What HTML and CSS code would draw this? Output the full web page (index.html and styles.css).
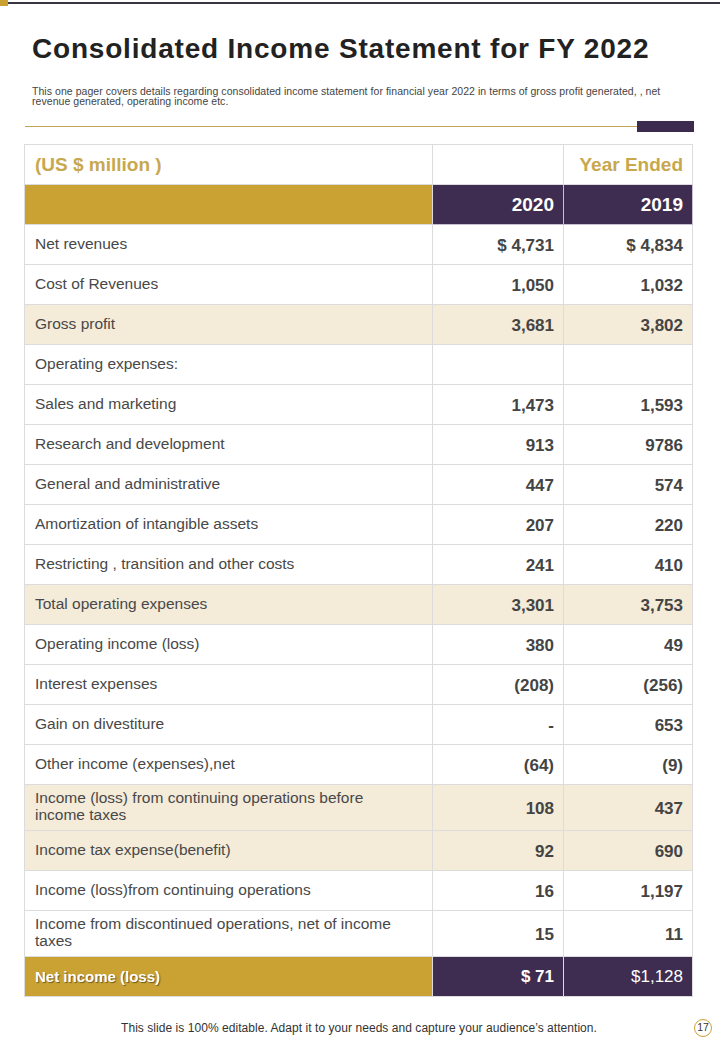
FILE: index.html
```html
<!DOCTYPE html>
<html>
<head>
<meta charset="utf-8">
<link rel="stylesheet" href="styles.css">
</head>
<body>
<div class="page">
  <div class="topbar"><span class="top-gold"></span><span class="top-line"></span></div>
  <h1 class="title">Consolidated Income Statement for FY 2022</h1>
  <p class="subtitle">This one pager covers details regarding consolidated income statement for financial year 2022 in terms of gross profit generated, , net revenue generated, operating income etc.</p>
  <div class="divider"><span class="div-line"></span><span class="div-block"></span></div>

  <table class="fin">
    <colgroup><col class="c-label"><col class="c-num"><col class="c-num2"></colgroup>
    <tr class="h1">
      <td class="unit">(US $ million )</td>
      <td></td>
      <td class="ye">Year Ended</td>
    </tr>
    <tr class="h2">
      <td class="gold"></td>
      <td class="purple">2020</td>
      <td class="purple">2019</td>
    </tr>
    <tr><td class="lbl">Net revenues</td><td class="num">$ 4,731</td><td class="num">$ 4,834</td></tr>
    <tr><td class="lbl">Cost of Revenues</td><td class="num">1,050</td><td class="num">1,032</td></tr>
    <tr class="hl"><td class="lbl">Gross profit</td><td class="num">3,681</td><td class="num">3,802</td></tr>
    <tr><td class="lbl">Operating expenses:</td><td class="num"></td><td class="num"></td></tr>
    <tr><td class="lbl">Sales and marketing</td><td class="num">1,473</td><td class="num">1,593</td></tr>
    <tr><td class="lbl">Research and development</td><td class="num">913</td><td class="num">9786</td></tr>
    <tr><td class="lbl">General and administrative</td><td class="num">447</td><td class="num">574</td></tr>
    <tr><td class="lbl">Amortization of intangible assets</td><td class="num">207</td><td class="num">220</td></tr>
    <tr><td class="lbl">Restricting , transition and other costs</td><td class="num">241</td><td class="num">410</td></tr>
    <tr class="hl"><td class="lbl">Total operating expenses</td><td class="num">3,301</td><td class="num">3,753</td></tr>
    <tr><td class="lbl">Operating income (loss)</td><td class="num">380</td><td class="num">49</td></tr>
    <tr><td class="lbl">Interest expenses</td><td class="num">(208)</td><td class="num">(256)</td></tr>
    <tr><td class="lbl">Gain on divestiture</td><td class="num">-</td><td class="num">653</td></tr>
    <tr><td class="lbl">Other income (expenses),net</td><td class="num">(64)</td><td class="num">(9)</td></tr>
    <tr class="hl tall"><td class="lbl two">Income (loss) from continuing operations before income taxes</td><td class="num">108</td><td class="num">437</td></tr>
    <tr class="hl"><td class="lbl">Income tax expense(benefit)</td><td class="num">92</td><td class="num">690</td></tr>
    <tr><td class="lbl">Income (loss)from continuing operations</td><td class="num">16</td><td class="num">1,197</td></tr>
    <tr class="tall"><td class="lbl two">Income from discontinued operations, net of income taxes</td><td class="num">15</td><td class="num">11</td></tr>
    <tr class="total">
      <td class="gold tl">Net income (loss)</td>
      <td class="purple tv">$ 71</td>
      <td class="purple tv light">$1,128</td>
    </tr>
  </table>

  <div class="footer">
    <p class="foot-text">This slide is 100% editable. Adapt it to your needs and capture your audience’s attention.</p>
    <span class="pagenum">17</span>
  </div>
</div>
</body>
</html>
```

FILE: styles.css
```css
* { box-sizing: border-box; }
html, body { margin: 0; padding: 0; background: #ffffff; }
body { width: 720px; height: 1040px; overflow: hidden; font-family: "Liberation Sans", Arial, sans-serif; color: #404040; }
.page { position: relative; width: 720px; height: 1040px; }

.topbar { display: flex; align-items: flex-start; height: 6px; }
.top-gold { width: 8px; height: 6px; background: #c9a233; }
.top-line { flex: 1; height: 2px; margin-top: 2px; background: #3a3440; }

.title {
  margin: 27px 0 0 32px;
  font-size: 28px;
  line-height: 32px;
  font-weight: 700;
  color: #222222;
  letter-spacing: 0.8px;
}

.subtitle {
  margin: 21px 0 0 32px;
  width: 642px;
  font-size: 10.5px;
  line-height: 10px;
  color: #444444;
  letter-spacing: 0.05px;
}

.divider { display: flex; align-items: center; margin: 15px 0 0 25px; width: 669px; height: 11px; }
.div-line { flex: 1; height: 1px; background: #c2a55a; }
.div-block { width: 57px; height: 11px; background: #3d2b4f; }

.fin {
  margin: 12px 0 0 24px;
  width: 668px;
  border-collapse: collapse;
  table-layout: fixed;
  border: 1px solid #d9d9d9;
}
.c-label { width: 408px; }
.c-num { width: 131px; }
.c-num2 { width: 129px; }

.fin td {
  border: 1px solid #dcdcdc;
  height: 40px;
  padding: 0;
  vertical-align: middle;
}
.fin tr.tall td { height: 46px; }

.lbl {
  padding-left: 10px !important;
  padding-right: 20px !important;
  font-size: 15.5px;
  line-height: 18px;
  color: #484848;
  padding-bottom: 2px !important;
}
.lbl.two { line-height: 17px; padding-bottom: 3px !important; }

.num {
  text-align: right;
  padding-right: 9px !important;
  font-size: 17px;
  font-weight: 700;
  color: #444444;
  padding-top: 2px !important;
}

.hl td { background: #f4ebd9; }

.h1 td { height: 40px; }
.unit { padding-left: 10px !important; font-size: 19px; font-weight: 700; color: #c8a84e; }
.ye { text-align: right; padding-right: 9px !important; font-size: 19px; font-weight: 700; color: #c8a84e; }

.gold { background: #c9a233; }
.purple { background: #3e2d50; color: #ffffff; text-align: right; padding-right: 9px !important; font-size: 19px; font-weight: 700; }
.h2 .purple { border-color: #c9bfd2 !important; }
.h2 td { border-top-color: #dcdcdc; }

.total td { height: 40px; }
.tl { padding-left: 10px !important; color: #ffffff; font-size: 15px; font-weight: 700; text-shadow: 1px 1px 1px rgba(0,0,0,0.45); }
.tv { font-size: 17px; }
.tv.light { font-weight: 400; }

.footer {
  position: absolute;
  left: 0; right: 0; top: 1019px;
  height: 18px;
  display: flex;
  justify-content: center;
  align-items: center;
}
.foot-text {
  margin: 0 0 0 -2px;
  font-size: 12px;
  color: #333333;
  letter-spacing: 0.05px;
}
.pagenum {
  position: absolute;
  left: 694px; top: 0;
  width: 18px; height: 18px;
  border: 1.5px solid #c9a233;
  border-radius: 50%;
  font-size: 10.5px;
  line-height: 15px;
  text-align: center;
  color: #333333;
}
```
